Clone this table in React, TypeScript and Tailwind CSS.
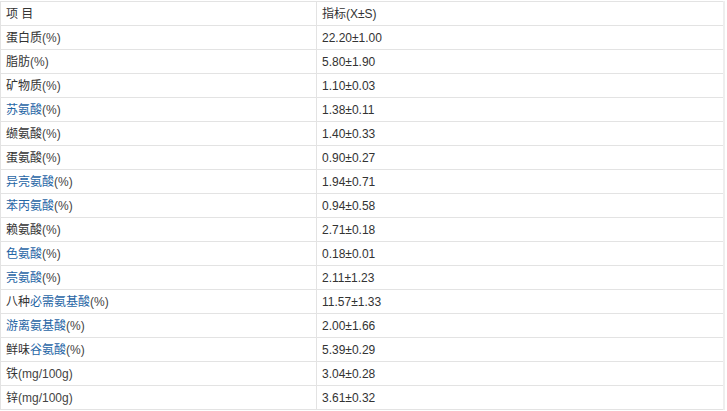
const rows: { pre?: string; link?: string; post: string; val: string }[] = [
  { pre: '蛋白质', post: '(%)', val: '22.20±1.00' },
  { pre: '脂肪', post: '(%)', val: '5.80±1.90' },
  { pre: '矿物质', post: '(%)', val: '1.10±0.03' },
  { link: '苏氨酸', post: '(%)', val: '1.38±0.11' },
  { pre: '缬氨酸', post: '(%)', val: '1.40±0.33' },
  { pre: '蛋氨酸', post: '(%)', val: '0.90±0.27' },
  { link: '异亮氨酸', post: '(%)', val: '1.94±0.71' },
  { link: '苯丙氨酸', post: '(%)', val: '0.94±0.58' },
  { pre: '赖氨酸', post: '(%)', val: '2.71±0.18' },
  { link: '色氨酸', post: '(%)', val: '0.18±0.01' },
  { link: '亮氨酸', post: '(%)', val: '2.11±1.23' },
  { pre: '八种', link: '必需氨基酸', post: '(%)', val: '11.57±1.33' },
  { link: '游离氨基酸', post: '(%)', val: '2.00±1.66' },
  { pre: '鲜味', link: '谷氨酸', post: '(%)', val: '5.39±0.29' },
  { pre: '铁', post: '(mg/100g)', val: '3.04±0.28' },
  { pre: '锌', post: '(mg/100g)', val: '3.61±0.32' },
];

export default function App() {
  return (
    <div
      className="w-[727px] h-[411px] bg-white pt-px text-[12px] text-[#333]"
      style={{ fontFamily: '"Liberation Sans", Arial, "Noto Sans CJK SC", sans-serif' }}
    >
      <table className="w-[725px] border-collapse table-fixed border-r-[2px] border-r-[#eeeeee]">
        <colgroup>
          <col className="w-[316px]" />
          <col />
        </colgroup>
        <tbody>
          <tr className="h-[24px]">
            <td className="border border-[#e3e3e3] px-[5px] py-0 align-middle">项 目</td>
            <td className="border border-[#e3e3e3] px-[5px] py-0 align-middle">指标(X±S)</td>
          </tr>
          {rows.map((r, i) => (
            <tr key={i} className="h-[24px]">
              <td className="border border-[#e3e3e3] px-[5px] py-0 align-middle">
                {r.pre}
                {r.link && <a className="text-[#1f65a5]">{r.link}</a>}
                <span className="text-[#444]">{r.post}</span>
              </td>
              <td className="border border-[#e3e3e3] px-[5px] py-0 align-middle">{r.val}</td>
            </tr>
          ))}
        </tbody>
      </table>
    </div>
  );
}
